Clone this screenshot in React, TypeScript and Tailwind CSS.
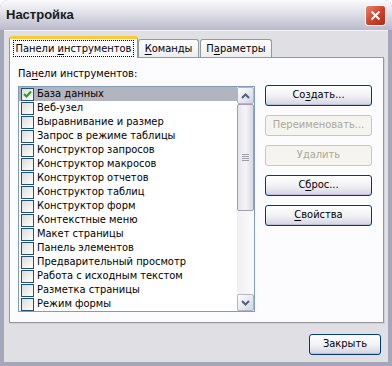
import React from 'react'

const items = [
  'База данных',
  'Веб-узел',
  'Выравнивание и размер',
  'Запрос в режиме таблицы',
  'Конструктор запросов',
  'Конструктор макросов',
  'Конструктор отчетов',
  'Конструктор таблиц',
  'Конструктор форм',
  'Контекстные меню',
  'Макет страницы',
  'Панель элементов',
  'Предварительный просмотр',
  'Работа с исходным текстом',
  'Разметка страницы',
  'Режим формы',
]

function U({ children }: { children: React.ReactNode }) {
  return <span className="underline underline-offset-[2px]">{children}</span>
}

function Button({ children, disabled = false, className = '' }: { children: React.ReactNode; disabled?: boolean; className?: string }) {
  return disabled ? (
    <div className={'flex h-[21px] items-center justify-center rounded-[3px] border border-[#c9c7ba] bg-[#f5f4f0] text-[#aca899] ' + className}>
      {children}
    </div>
  ) : (
    <div className={'flex h-[21px] items-center justify-center rounded-[3px] border border-[#003c74] bg-gradient-to-b from-white via-[#f2f2f6] to-[#d4d4e2] text-black shadow-[inset_0_-1px_0_#c0c0d4] ' + className}>
      {children}
    </div>
  )
}

function Check({ checked }: { checked: boolean }) {
  return (
    <div className="flex h-[13px] w-[13px] shrink-0 items-center justify-center border border-[#1c5180] bg-gradient-to-br from-[#dcdcd7] to-white">
      {checked && (
        <svg width="9" height="9" viewBox="0 0 9 9">
          <path d="M1 4 L3.5 6.5 L8 1.5" fill="none" stroke="#21a121" strokeWidth="2" />
        </svg>
      )}
    </div>
  )
}

function Arrow({ up }: { up: boolean }) {
  return (
    <div className="flex h-[17px] w-[17px] items-center justify-center rounded-[2px] border border-[#b4b4c4] bg-gradient-to-br from-white to-[#d4d4e0]">
      <svg width="9" height="6" viewBox="0 0 9 6">
        <path d={up ? 'M1 5 L4.5 1.5 L8 5' : 'M1 1 L4.5 4.5 L8 1'} fill="none" stroke="#4d6185" strokeWidth="2" />
      </svg>
    </div>
  )
}

export default function App() {
  return (
    <div className="h-[366px] w-[392px] overflow-hidden rounded-t-[8px] bg-[#a6a6ba] font-['DejaVu_Sans_Condensed','Liberation_Sans',sans-serif] text-[11px] text-black">
      {/* title bar */}
      <div className="relative flex h-[30px] items-center bg-gradient-to-b from-[#fbfbfd] via-[#dcdce6] to-[#babacb] pl-[6px]">
        <span className="font-['Liberation_Sans',sans-serif] text-[13px] font-bold text-[#1a1a1a]">Настройка</span>
        <div className="absolute right-[6px] top-[5px] flex h-[21px] w-[21px] items-center justify-center rounded-[3px] border border-white bg-gradient-to-br from-[#e6826a] via-[#d0442a] to-[#b02a14]">
          <svg width="11" height="11" viewBox="0 0 11 11">
            <path d="M1.5 1.5 L9.5 9.5 M9.5 1.5 L1.5 9.5" stroke="white" strokeWidth="2" />
          </svg>
        </div>
      </div>

      {/* body */}
      <div className="mx-[4px] flex h-[332px] flex-col border-t border-[#f4f4f8] bg-[#e0dfe3] px-[5px] pt-[6px]">
        {/* tabs */}
        <div className="flex h-[21px] items-end">
          <div className="relative z-10 flex h-[22px] w-[129px] items-end justify-center rounded-t-[3px] border-x border-t-[3px] border-x-[#919b9c] border-t-[#ffc83c] bg-[#fcfcfe]">
            <span className="mb-[1px] border border-dotted border-black px-[2px] leading-[15px]">
              Панели <U>и</U>нструментов
            </span>
          </div>
          <div className="flex h-[19px] w-[61px] items-center justify-center rounded-t-[3px] border-x border-t border-[#919b9c] bg-gradient-to-b from-white to-[#ececf0]">
            <span>
              <U>К</U>оманды
            </span>
          </div>
          <div className="ml-[1px] flex h-[19px] w-[72px] items-center justify-center rounded-t-[3px] border-x border-t border-[#919b9c] bg-gradient-to-b from-white to-[#ececf0]">
            <span>
              П<U>а</U>раметры
            </span>
          </div>
        </div>

        {/* panel */}
        <div className="-mt-px h-[266px] w-[375px] border border-[#919b9c] bg-[#fcfcfe] shadow-[1px_1px_0_#d0d0d8] pl-[8px] pt-[9px]">
          <div className="leading-[14px]">
            Па<U>н</U>ели инструментов:
          </div>
          <div className="mt-[5px] flex gap-[10px]">
            {/* list */}
            <div className="flex h-[226px] w-[237px] border border-[#7f9db9] bg-white">
              <div className="flex-1 overflow-hidden">
                {items.map((it, i) => (
                  <div key={it} className={'flex h-[14px] items-center gap-[3px] whitespace-nowrap pl-[2px] ' + (i === 0 ? 'bg-[#b2b4bf]' : '')}>
                    <Check checked={i === 0} />
                    <span className="leading-[14px]">{it}</span>
                  </div>
                ))}
              </div>
              {/* scrollbar */}
              <div className="flex w-[17px] flex-col bg-gradient-to-r from-[#f0f0f4] to-[#fbfbfd]">
                <Arrow up />
                <div className="flex h-[107px] flex-col items-center justify-center rounded-[2px] border border-[#a0a0b4] bg-gradient-to-r from-[#e4e4ec] via-[#f4f4f8] to-[#d8d8e4]">
                  <div className="flex flex-col gap-[1px]">
                    <div className="h-px w-[7px] bg-[#9c9cb0]" />
                    <div className="h-px w-[7px] bg-[#9c9cb0]" />
                    <div className="h-px w-[7px] bg-[#9c9cb0]" />
                    <div className="h-px w-[7px] bg-[#9c9cb0]" />
                  </div>
                </div>
                <div className="flex-1" />
                <Arrow up={false} />
              </div>
            </div>

            {/* buttons */}
            <div className="-mt-[1px] flex w-[107px] flex-col gap-[9px]">
              <Button>
                <span>
                  Со<U>з</U>дать...
                </span>
              </Button>
              <Button disabled>Переименовать...</Button>
              <Button disabled>Удалить</Button>
              <Button>
                <span>
                  С<U>б</U>рос...
                </span>
              </Button>
              <Button>
                <span>
                  <U>С</U>войства
                </span>
              </Button>
            </div>
          </div>
        </div>

        {/* footer */}
        <div className="mt-[11px] flex justify-end pr-[2px]">
          <Button className="w-[72px]">Закрыть</Button>
        </div>
      </div>
    </div>
  )
}
